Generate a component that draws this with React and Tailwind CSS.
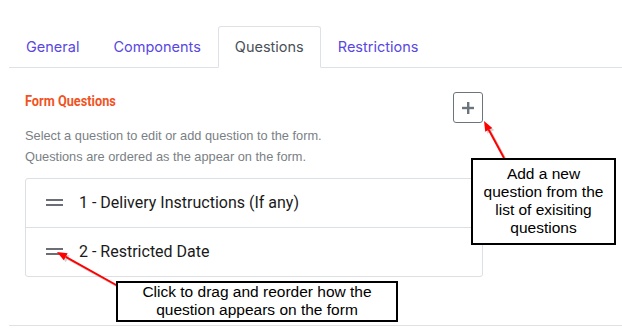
import React from "react";

// Tab labels for the form editor
const tabs = [
  { id: "general", label: "General" },
  { id: "components", label: "Components" },
  { id: "questions", label: "Questions" },
  { id: "restrictions", label: "Restrictions" },
];

const questions = [
  { id: 1, label: "1 - Delivery Instructions (If any)" },
  { id: 2, label: "2 - Restricted Date" },
];

function DragHandle() {
  return (
    <svg width="18" height="8" viewBox="0 0 18 8" className="shrink-0">
      <rect x="0" y="0" width="17" height="2" fill="#6b6f75" />
      <rect x="0" y="5" width="17" height="2" fill="#6b6f75" />
    </svg>
  );
}

function Arrow({ x1, y1, x2, y2 }) {
  // simple red arrow with a soft grey shadow, tip at (x2, y2)
  const ang = Math.atan2(y2 - y1, x2 - x1);
  const len = 10;
  const w = 4;
  const bx = x2 - len * Math.cos(ang);
  const by = y2 - len * Math.sin(ang);
  const px = -Math.sin(ang) * w;
  const py = Math.cos(ang) * w;
  const head = `${x2},${y2} ${bx + px},${by + py} ${bx - px},${by - py}`;
  return (
    <g>
      <g transform="translate(2,2)" opacity="0.25">
        <line x1={x1} y1={y1} x2={bx} y2={by} stroke="#555" strokeWidth="2" />
        <polygon points={head} fill="#555" />
      </g>
      <line x1={x1} y1={y1} x2={bx} y2={by} stroke="#ff0000" strokeWidth="2" />
      <polygon points={head} fill="#ff0000" />
    </g>
  );
}

export default function App() {
  return (
    <div className="relative w-[622px] h-[329px] overflow-hidden bg-white font-['Inter',sans-serif]">
      <div className="ml-[9px] pt-[26px]">
        {/* Tabs */}
        <nav className="flex border-b border-[#dee2e6]">
          {tabs.map((tab) => {
            const active = tab.id === "questions";
            return (
              <div
                key={tab.id}
                className={
                  active
                    ? "-mb-px h-[42px] px-4 flex items-center border border-[#dee2e6] border-b-white rounded-t-[3px] bg-white text-[14.5px] text-[#495057]"
                    : "-mb-px h-[42px] px-4 flex items-center border border-transparent text-[14.5px] text-[#5848e0]"
                }
              >
                {tab.label}
              </div>
            );
          })}
        </nav>

        {/* Questions panel */}
        <div className="ml-4 w-[458px] pt-[24px]">
          <div className="flex items-start justify-between">
            <h2 className="pt-[1px] inline-block origin-left scale-x-[0.91] text-[14px] leading-[16px] font-bold text-[#f05323] font-['Roboto',sans-serif]">
              Form Questions
            </h2>
            <button className="w-[30px] h-[31px] flex items-center justify-center rounded-[3px] border border-[#6c757d] bg-white">
              <svg width="12" height="12" viewBox="0 0 12 12">
                <rect x="5" y="0" width="2.4" height="12" fill="#6c757d" />
                <rect x="0" y="4.8" width="12" height="2.4" fill="#6c757d" />
              </svg>
            </button>
          </div>
          <p className="mt-[2px] text-[12.8px] leading-[21px] text-[#7a7f85] font-['Liberation_Sans',Arial,sans-serif]">
            Select a question to edit or add question to the form.
            <br />
            Questions are ordered as the appear on the form.
          </p>

          <ul className="mt-[11px] border border-[#dcdfe3] rounded-[3px]">
            {questions.map((q, i) => (
              <li
                key={q.id}
                className={
                  i === 0
                    ? "h-[49px] flex items-center gap-[15px] pl-[20px] border-b border-[#dcdfe3]"
                    : "h-[48px] flex items-center gap-[15px] pl-[20px]"
                }
              >
                <DragHandle />
                <span className="text-[16px] text-[#1a1a1a] font-['Roboto',sans-serif]">{q.label}</span>
              </li>
            ))}
          </ul>
        </div>

        <div className="mt-[48px] border-b border-[#dee2e6]" />
      </div>

      {/* Annotation arrows */}
      <svg className="absolute inset-0 pointer-events-none" width="622" height="329">
        <Arrow x1={504} y1={158} x2={484} y2={121} />
        <Arrow x1={118} y1={286} x2={57} y2={252} />
      </svg>

      {/* Annotation callouts */}
      <div className="absolute left-[471px] top-[158px] w-[145px] h-[87px] border-2 border-black bg-white pt-[5px] text-center text-[15.5px] leading-[18px] text-black font-['Liberation_Sans',Arial,sans-serif]">
        Add a new
        <br />
        question from the
        <br />
        list of exisiting
        <br />
        questions
      </div>
      <div className="absolute left-[116px] top-[281px] w-[282px] h-[41px] border-2 border-black bg-white text-center text-[15.5px] leading-[18px] text-black font-['Liberation_Sans',Arial,sans-serif]">
        Click to drag and reorder how the
        <br />
        question appears on the form
      </div>
    </div>
  );
}
